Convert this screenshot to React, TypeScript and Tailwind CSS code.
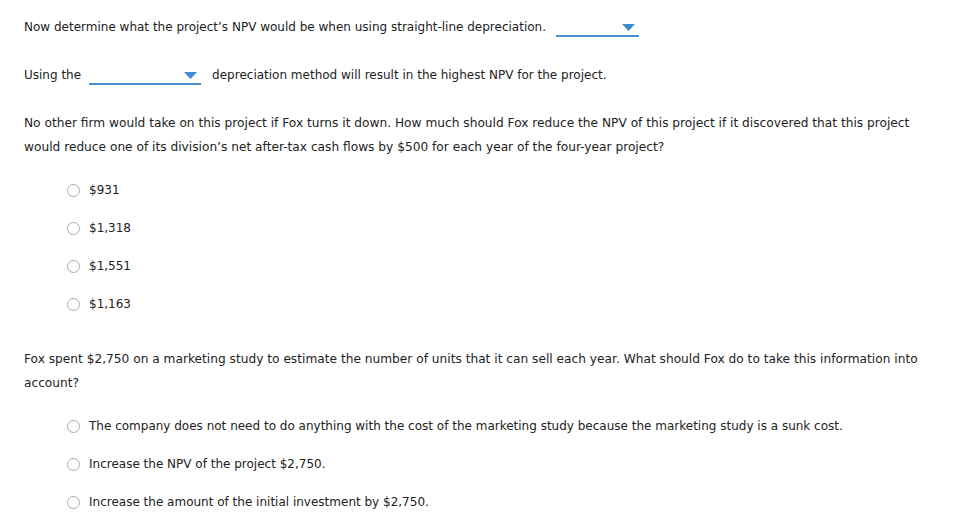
import React from "react";

function Dropdown({ w }: { w: string }) {
  return (
    <span className={`relative inline-block ${w} h-[16px] border-b-2 border-[#4a90d0] align-[-6px]`}>
      <svg className="absolute right-[4px] top-[3px]" width="13" height="8" viewBox="0 0 13 8">
        <polygon points="0,0 13,0 6.5,7" fill="#3d8bd0" />
      </svg>
    </span>
  );
}

function Radio({ label }: { label: string }) {
  return (
    <div className="flex items-center h-[38px] pl-[43px]">
      <span className="inline-block w-[13px] h-[13px] rounded-full border border-[#aaaaaa] bg-white" />
      <span className="ml-[9px]">{label}</span>
    </div>
  );
}

export default function App() {
  return (
    <div className="w-[969px] h-[518px] bg-white text-[#222] text-[12px] pl-[24px] overflow-hidden" style={{ fontFamily: '"DejaVu Sans", Verdana, sans-serif' }}>
      <div className="pt-[17px] h-[20px] box-content flex items-center">
        <span>Now determine what the project’s NPV would be when using straight-line depreciation.</span>
        <span className="ml-[10px]"><Dropdown w="w-[83px]" /></span>
      </div>
      <div className="mt-[28px] h-[20px] flex items-center">
        <span>Using the</span>
        <span className="ml-[8px] mr-[11px]"><Dropdown w="w-[112px]" /></span>
        <span>depreciation method will result in the highest NPV for the project.</span>
      </div>
      <div className="mt-[26px] leading-[24px] pr-[40px] text-[12.2px]">
        No other firm would take on this project if Fox turns it down. How much should Fox reduce the NPV of this project if it discovered that this project would reduce one of its division’s net after-tax cash flows by $500 for each year of the four-year project?
      </div>
      <div className="mt-[12px]">
        <Radio label="$931" />
        <Radio label="$1,318" />
        <Radio label="$1,551" />
        <Radio label="$1,163" />
      </div>
      <div className="mt-[24px] leading-[24px] pr-[40px] text-[12.2px]">
        Fox spent $2,750 on a marketing study to estimate the number of units that it can sell each year. What should Fox do to take this information into account?
      </div>
      <div className="mt-[12px]">
        <Radio label="The company does not need to do anything with the cost of the marketing study because the marketing study is a sunk cost." />
        <Radio label="Increase the NPV of the project $2,750." />
        <Radio label="Increase the amount of the initial investment by $2,750." />
      </div>
    </div>
  );
}
